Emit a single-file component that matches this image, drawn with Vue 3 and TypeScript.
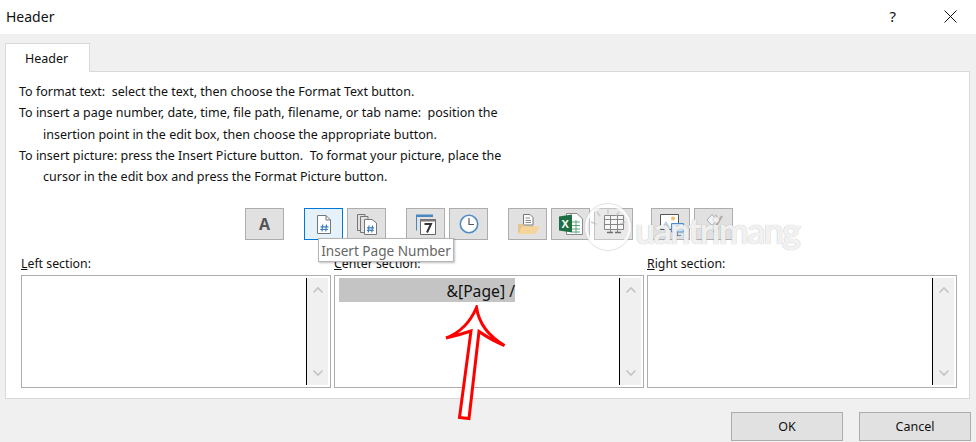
<script setup lang="ts">
const intro = [
  { text: 'To format text:  select the text, then choose the Format Text button.', indent: false },
  { text: 'To insert a page number, date, time, file path, filename, or tab name:  position the', indent: false },
  { text: 'insertion point in the edit box, then choose the appropriate button.', indent: true },
  { text: 'To insert picture: press the Insert Picture button.  To format your picture, place the', indent: false },
  { text: 'cursor in the edit box and press the Format Picture button.', indent: true },
]
</script>

<template>
  <div class="dialog">
    <div class="title-bar">
      <span class="title">Header</span>
      <span class="help">?</span>
      <svg class="close" width="13" height="13" viewBox="0 0 13 13">
        <path d="M0.500 0.500L12.500 12.500M12.500 0.500L0.500 12.500" stroke="#111" stroke-width="1" fill="none" />
      </svg>
    </div>

    <div class="tabs">
      <div class="tab">Header</div>
    </div>

    <div class="panel">
      <div class="intro">
        <p v-for="line in intro" :key="line.text" :class="{ indent: line.indent }">{{ line.text }}</p>
      </div>

      <div class="toolbar">
        <div class="tool-group">
          <button class="tool"><span class="letter">A</span></button>
        </div>
        <div class="tool-group">
          <button class="tool active">
            <svg width="22" height="24" viewBox="0 0 22 24">
              <path d="M4.500 3.500H13L17.500 8V21.500H4.500Z" fill="#fff" stroke="#777" />
              <path d="M13 3.500V8H17.500" fill="none" stroke="#777" />
              <path d="M9.800 12.500L9 19.500M13.500 12.500L12.700 19.500M7.500 14.800H15.500M7.200 17.500H15" stroke="#3f7fbf" stroke-width="1.200" fill="none" />
            </svg>
            <span class="tooltip">Insert Page Number</span>
          </button>
          <button class="tool">
            <svg width="24" height="24" viewBox="0 0 24 24">
              <path d="M2.500 2.500H10V18.500H2.500Z" fill="none" stroke="#777" />
              <path d="M5.500 4.500H13V20.500H5.500Z" fill="#e1e1e1" stroke="#777" />
              <path d="M9.500 7.500H17L21.500 11V22.500H9.500Z" fill="#fff" stroke="#777" />
              <path d="M14 13.500L13.300 20.500M17.500 13.500L16.800 20.500M12 15.800H19M11.800 18.300H18.800" stroke="#3f7fbf" stroke-width="1.200" fill="none" />
            </svg>
          </button>
        </div>
        <div class="tool-group">
          <button class="tool">
            <svg width="24" height="24" viewBox="0 0 24 24">
              <path d="M2.500 4V18.500" stroke="#4a86c0" fill="none" />
              <path d="M2 2.500H19V5H2Z" fill="#4a86c0" />
              <path d="M6.500 7.500H21.500V22.500H6.500Z" fill="#fff" stroke="#666" />
              <path d="M6 7H22V9.500H6Z" fill="#777" />
              <path d="M10.500 12H17L13 20.500" stroke="#333" stroke-width="2" fill="none" />
            </svg>
          </button>
          <button class="tool">
            <svg width="22" height="22" viewBox="0 0 22 22">
              <circle cx="11" cy="11" r="8.700" fill="#fff" stroke="#4f8bc4" stroke-width="1.600" />
              <path d="M11 5V11.500H16" stroke="#555" stroke-width="1.200" fill="none" />
            </svg>
          </button>
        </div>
        <div class="tool-group">
          <button class="tool">
            <svg width="28" height="24" viewBox="0 0 28 24">
              <path d="M9.500 2.500H16L19 5.500V13H9.500Z" fill="#fff" stroke="#777" />
              <path d="M11.500 6H16M11.500 8.500H17M11.500 10.500H17" stroke="#888" fill="none" />
              <path d="M4 21V12H9L11 14H21V21Z" fill="#e6c48d" />
              <path d="M4 22L8 14.500H26L21 22Z" fill="#f5d49c" />
            </svg>
          </button>
          <button class="tool">
            <svg width="26" height="24" viewBox="0 0 26 24">
              <path d="M8.500 1.500H19L24.500 7V22.500H8.500Z" fill="#fff" stroke="#888" />
              <path d="M14 10H22M14 13.500H22M14 17H22M14 20H22M18 8V21.500" stroke="#5aa577" fill="none" />
              <path d="M1 4.500L14 2.500V20.500L1 18.500Z" fill="#1d6f42" />
              <text x="3.600" y="15.500" class="xl">X</text>
            </svg>
          </button>
          <button class="tool">
            <svg width="26" height="24" viewBox="0 0 26 24">
              <path d="M3.500 3.500H22.500V17.500H3.500Z" fill="#f4f4f4" stroke="#555" />
              <path d="M3.500 7.500H22.500M3.500 12.500H22.500M9.500 3.500V20M16.500 3.500V20" stroke="#555" fill="none" />
              <path d="M6 20.500H12M14 20.500H20" stroke="#333" stroke-width="1.400" fill="none" />
            </svg>
          </button>
        </div>
        <div class="tool-group tight">
          <button class="tool">
            <svg width="28" height="26" viewBox="0 0 28 26">
              <path d="M3.500 3.500H21.500V18.500H3.500Z" fill="#fff" stroke="#555" />
              <circle cx="16" cy="7.500" r="2" fill="#f0c070" />
              <path d="M4 18L9 10L14 18Z" fill="#b9cfe6" />
              <path d="M14.500 12.500H26.500V21H14.500Z" fill="#cfe3f5" stroke="#4f8bc4" />
              <path d="M20.500 21V24M17 24.500H24" stroke="#4f8bc4" fill="none" />
            </svg>
          </button>
          <button class="tool">
            <svg width="26" height="26" viewBox="0 0 26 26">
              <path d="M6 9L11 3.500L16 9L11 14.500Z" fill="#f3f3f3" stroke="#aaa" />
              <path d="M14 4C16 4 16.500 6 16 8" stroke="#aaa" fill="none" />
              <path d="M21 5L15 15" stroke="#aaa" stroke-width="2" fill="none" />
              <path d="M12 21L15 15L18 17L15 23Z" fill="#999" />
            </svg>
          </button>
        </div>
      </div>

      <div class="sections">
        <div class="section">
          <label><u>L</u>eft section:</label>
          <div class="edit-box">
            <div class="edit-text"></div>
            <div class="scrollbar">
              <svg width="12" height="8" viewBox="0 0 12 8"><path d="M1.500 6.500L6 2L10.500 6.500" stroke="#c4c4c4" stroke-width="1.600" fill="none" /></svg>
              <svg width="12" height="8" viewBox="0 0 12 8"><path d="M1.500 1.500L6 6L10.500 1.500" stroke="#c4c4c4" stroke-width="1.600" fill="none" /></svg>
            </div>
          </div>
        </div>
        <div class="section">
          <label><u>C</u>enter section:</label>
          <div class="edit-box">
            <div class="edit-text"><span class="selected">&amp;[Page] /</span></div>
            <div class="scrollbar">
              <svg width="12" height="8" viewBox="0 0 12 8"><path d="M1.500 6.500L6 2L10.500 6.500" stroke="#c4c4c4" stroke-width="1.600" fill="none" /></svg>
              <svg width="12" height="8" viewBox="0 0 12 8"><path d="M1.500 1.500L6 6L10.500 1.500" stroke="#c4c4c4" stroke-width="1.600" fill="none" /></svg>
            </div>
          </div>
        </div>
        <div class="section">
          <label><u>R</u>ight section:</label>
          <div class="edit-box">
            <div class="edit-text"></div>
            <div class="scrollbar">
              <svg width="12" height="8" viewBox="0 0 12 8"><path d="M1.500 6.500L6 2L10.500 6.500" stroke="#c4c4c4" stroke-width="1.600" fill="none" /></svg>
              <svg width="12" height="8" viewBox="0 0 12 8"><path d="M1.500 1.500L6 6L10.500 1.500" stroke="#c4c4c4" stroke-width="1.600" fill="none" /></svg>
            </div>
          </div>
        </div>
      </div>
    </div>

    <div class="footer">
      <button class="action">OK</button>
      <button class="action">Cancel</button>
    </div>

    <div class="watermark">
      <svg width="50" height="50" viewBox="0 0 50 50">
        <circle cx="25" cy="25" r="22" fill="rgba(255,255,255,0.35)" stroke="#fff" stroke-width="3" opacity="0.85" />
        <circle cx="25" cy="25" r="23.500" fill="none" stroke="#bbb" stroke-width="1" opacity="0.45" />
        <path d="M25 7V12M14 10L17 14M36 10L33 14M8 20L13 22M42 20L37 22" stroke="#bbb" stroke-width="1.400" opacity="0.7" fill="none" />
      </svg>
      <span>uantrimang</span>
    </div>

    <svg class="arrow" width="70" height="124" viewBox="0 0 70 124">
      <path d="M33.500 2.500Q37 26 61.500 40.500Q48 35 36 26.500L26 113.500L16.500 112.500L28 26Q16 30 3 33Q24 25 33.500 2.500Z" fill="#fff" stroke="#f00" stroke-width="3" stroke-linejoin="miter" />
    </svg>
  </div>
</template>

<style>
html, body {
  margin: 0;
  background: #f0f0f0;
}
</style>

<style scoped>
.dialog {
  position: relative;
  width: 976px;
  height: 442px;
  overflow: hidden;
  background: #f0f0f0;
  font-family: "Noto Sans", "Open Sans", sans-serif;
  font-size: 12.500px;
  color: #111;
}

.title-bar {
  height: 32px;
  padding-bottom: 2px;
  background: #fff;
  display: flex;
  align-items: center;
  padding-left: 6px;
}

.title {
  font-size: 14px;
  flex: 1;
}

.help {
  font-size: 15px;
  margin-right: 48px;
}

.close {
  margin-right: 19px;
}

.tabs {
  display: flex;
  padding: 9px 0 0 5px;
  height: 28px;
}

.tab {
  width: 81px;
  height: 28px;
  background: #fff;
  border: 1px solid #d9d9d9;
  border-bottom: none;
  display: flex;
  align-items: center;
  justify-content: center;
  font-size: 12.500px;
  position: relative;
  z-index: 1;
  padding-right: 2px;
}

.panel {
  margin: 0 5px;
  width: 965px;
  height: 328px;
  background: #fff;
  border: 1px solid #d9d9d9;
  box-sizing: border-box;
  padding: 9px 13px 0 15px;
}

.intro {
  margin-left: -2px;
}

.intro p {
  margin: 0;
  height: 21.250px;
  line-height: 21px;
  white-space: pre;
}

.intro .indent {
  padding-left: 24px;
}

.toolbar {
  display: flex;
  gap: 20px;
  margin-top: 21px;
  margin-left: 224px;
}

.tool-group {
  display: flex;
  gap: 4px;
}

.tool-group.tight {
  margin-left: -2px;
}

.tool {
  position: relative;
  width: 39px;
  height: 32px;
  padding: 0;
  background: #e1e1e1;
  border: 1px solid #adadad;
  display: flex;
  align-items: center;
  justify-content: center;
  font-family: inherit;
}

.tool.active {
  background: #e5f1fb;
  border: 1px solid #0078d7;
}

.letter {
  font-family: "Open Sans", sans-serif;
  font-weight: 700;
  font-size: 16px;
  color: #555;
}

.xl {
  font-family: "Liberation Sans", sans-serif;
  font-weight: 700;
  font-size: 11px;
  fill: #fff;
}

.tooltip {
  position: absolute;
  left: 13px;
  top: 29px;
  width: 136px;
  height: 24px;
  box-sizing: border-box;
  background: #fff;
  border: 1px solid #b5b5b5;
  box-shadow: 1px 1px 2px rgba(0, 0, 0, 0.25);
  display: flex;
  align-items: center;
  justify-content: center;
  font-size: 13.600px;
  color: #666;
  white-space: nowrap;
  z-index: 3;
}

.sections {
  display: grid;
  grid-template-columns: 310px 310px 310px;
  gap: 3px;
  margin-top: 15px;
}

.section label {
  display: block;
  height: 20px;
  line-height: 18px;
  font-size: 12.300px;
}

.edit-box {
  height: 113px;
  box-sizing: border-box;
  border: 1px solid #adadad;
  background: #fff;
  display: flex;
  padding: 2px;
}

.edit-text {
  flex: 1;
  padding-left: 2px;
}

.selected {
  display: block;
  width: 176px;
  height: 24px;
  line-height: 26px;
  background: #c4c4c4;
  text-align: right;
  font-size: 15.700px;
  box-sizing: border-box;
}

.scrollbar {
  width: 21px;
  border-left: 1px solid #000;
  background: #f0f0f0;
  display: flex;
  flex-direction: column;
  justify-content: space-between;
  align-items: center;
  padding: 8px 0;
}

.footer {
  display: flex;
  justify-content: flex-end;
  gap: 16px;
  padding: 13px 5px 0 0;
}

.action {
  width: 112px;
  height: 29px;
  background: #e1e1e1;
  border: 1px solid #adadad;
  font-family: inherit;
  font-size: 12.500px;
  color: #111;
  padding: 0;
}

.watermark {
  position: absolute;
  left: 583px;
  top: 202px;
  display: flex;
  align-items: center;
  z-index: 2;
  pointer-events: none;
}

.watermark span {
  font-family: "Lato", sans-serif;
  font-size: 36px;
  font-weight: 700;
  letter-spacing: -1.800px;
  color: rgba(255, 255, 255, 0.85);
  text-shadow: 0 0 1px rgba(130, 130, 130, 0.7);
  margin-top: 6px;
  margin-left: 2px;
}

.arrow {
  position: absolute;
  left: 443px;
  top: 305px;
  z-index: 4;
}
</style>
